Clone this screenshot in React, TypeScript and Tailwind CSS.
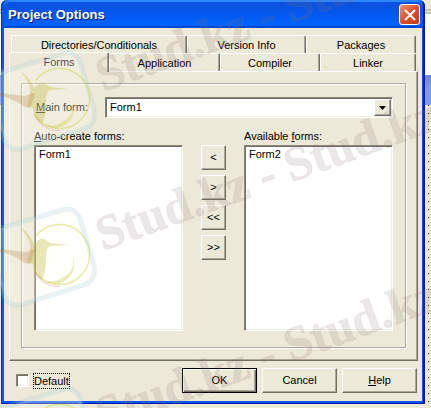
import React from 'react';
import clsx from 'clsx';

const raised =
  'border border-t-white border-l-white border-r-[#716f64] border-b-[#716f64] shadow-[inset_-1px_-1px_0_#aca899]';
const sunken =
  'rounded-none border border-t-[#8a877a] border-l-[#8a877a] border-r-white border-b-white bg-white shadow-[inset_1px_1px_0_#716f64,inset_-1px_-1px_0_#f1efe2]';

interface TabProps {
  children: React.ReactNode;
  active?: boolean;
}

const Tab: React.FC<TabProps> = ({ children, active }) => (
  <button
    role="tab"
    aria-selected={!!active}
    className={clsx(
      'rounded-t-[2px] border-t border-l border-r border-t-white border-l-white border-r-[#716f64] bg-[#ece9d8] text-center leading-[16px] shadow-[inset_-1px_0_0_#aca899]',
      active ? '-mt-px -mb-px -ml-0.5 pb-0.5' : 'h-[18px]'
    )}
  >
    {children}
  </button>
);

interface FormListProps {
  id: string;
  label: React.ReactNode;
  items: string[];
}

const FormList: React.FC<FormListProps> = ({ id, label, items }) => (
  <div>
    <label htmlFor={id} className="block h-4 leading-[14px]">{label}</label>
    <select
      id={id}
      size={2}
      className={clsx('block h-[186px] w-full appearance-none overflow-hidden p-0.5 outline-none', sunken)}
    >
      {items.map(item => (
        <option key={item} className="min-h-0 p-0 pl-0.5 leading-[13px]">{item}</option>
      ))}
    </select>
  </div>
);

const MoveButton: React.FC<{ sign: string; title: string }> = ({ sign, title }) => (
  <button aria-label={title} className={clsx('h-[25px] w-full leading-none', raised)}>{sign}</button>
);

const DialogButton: React.FC<{ children: React.ReactNode; primary?: boolean }> = ({ children, primary }) => (
  <button
    className={clsx(
      'h-[25px] w-[75px]',
      primary
        ? 'border border-black shadow-[inset_1px_1px_0_#fff,inset_-1px_-1px_0_#716f64,inset_-2px_-2px_0_#aca899]'
        : raised
    )}
  >
    {children}
  </button>
);

// Hummingbird in front of a ring, on a tilted card
const BirdMark: React.FC<{ y: number }> = ({ y }) => (
  <g transform={`translate(0 ${y})`} fill="none">
    <path
      d="M2 20 L62 2 Q75 -2 80 10 L94 57 Q97 72 84 77 L24 96 Q7 101 3 84 L-10 40 Q-12 24 2 20 Z"
      fill="#fbfdf0" fillOpacity=".3" stroke="#a5cdd6" strokeOpacity=".24" strokeWidth="5"
    />
    <path d="M36 28 A30 30 0 1 1 34 62" stroke="#c9cc2c" strokeOpacity=".4" strokeWidth="1.5" />
    <path d="M34 62 Q43 80 60 78" stroke="#e88a8a" strokeOpacity=".3" strokeWidth="1.5" />
    <path d="M73 47 Q76 64 62 70 Q54 75 44 73 Q58 80 67 71 Q77 63 73 47 Z" fill="#c9cc2c" fillOpacity=".35" />
    <path
      d="M20 19 Q31 26 34 37 Q39 28 46 32 L50 35 L68 37 L50 38 Q46 40 46 50 Q46 64 42 72 Q34 66 33 56 L28 55 Q26 54 30 44 Q32 32 20 19 Z"
      fill="#bfb52e" fillOpacity=".32"
    />
    <path d="M0 41 L26 44 Q33 40 35 42 L31 54 Q28 58 22 53 Q12 46 0 44 Z" fill="#b5702f" fillOpacity=".25" />
  </g>
);

const MarkText: React.FC<{ y: number }> = ({ y }) => (
  <text
    transform={`translate(103 ${y}) rotate(-20)`}
    className="font-['Liberation_Serif',serif] text-[49px] font-bold"
    fill="#7a6f6f" fillOpacity=".16" stroke="#c88" strokeOpacity=".1"
  >
    Stud.kz - Stud.kz
  </text>
);

const App: React.FC = () => (
  <div className="relative min-h-[408px] overflow-hidden font-['Liberation_Sans',sans-serif] text-[11px] text-black">
    {/* Designer window behind the dialog */}
    <div className="absolute inset-0 flex flex-col">
      <div className="h-[9px] bg-[#ece9d8]" />
      <div className="h-[5px] border-y-2 border-[#c5c2b0] bg-[#ece9d8]" />
      <div className="h-[61px] bg-white" />
      <div className="h-[30px] bg-linear-to-b from-[#6f86d0] via-[#809be4] to-[#7f9ce8]" />
      <div className="flex flex-1 justify-end bg-[#ece9d8] pr-0.5">
        <div className="w-px bg-[repeating-linear-gradient(#222_0_1px,transparent_1px_8px)]" />
      </div>
    </div>

    <div
      role="dialog"
      aria-label="Project Options"
      className="relative mr-1.5 ml-px rounded-t-[6px] bg-[#0a55ee] px-[3px] pb-[3px] shadow-[inset_1px_0_0_#0831d9,inset_-2px_-1px_0_#0019a8]"
    >
      <div className="flex h-7 items-center justify-between rounded-t-[5px] bg-linear-to-b from-[#0a4fd8] via-[#0458ee] to-[#0066ff] pt-px pr-0.5 pl-1 shadow-[inset_0_2px_1px_#2f86ff,inset_0_-2px_1px_#0048d0]">
        <h1 className="text-[13px] font-bold text-white text-shadow-[1px_1px_0_#0a1883]">Project Options</h1>
        <button
          aria-label="Close"
          className="flex size-[21px] items-center justify-center rounded-[3px] border border-white bg-linear-to-br from-[#f0906f] via-[#dd4f28] to-[#c03a14]"
        >
          <svg viewBox="0 0 12 12" className="size-3" stroke="#fff" strokeWidth="2">
            <path d="M1 1 L11 11 M11 1 L1 11" />
          </svg>
        </button>
      </div>

      <div className="bg-[#ece9d8] pt-[7px] pb-2">
        <div className="mr-1 ml-[5px]">
          <div role="tablist" className="mr-0.5 ml-0.5">
            <div className="grid grid-cols-[176fr_119fr_110fr]">
              <Tab>Directories/Conditionals</Tab>
              <Tab>Version Info</Tab>
              <Tab>Packages</Tab>
            </div>
            <div className="relative grid grid-cols-[98fr_111fr_100fr_96fr]">
              <Tab active>Forms</Tab>
              <Tab>Application</Tab>
              <Tab>Compiler</Tab>
              <Tab>Linker</Tab>
            </div>
          </div>

          <div className="border border-t-white border-l-white border-r-[#716f64] border-b-[#716f64] px-[11px] pt-[11px] pb-3 shadow-[inset_-1px_-1px_0_#aca899]">
            <div className="border border-[#aca899] px-3 pt-[13px] pb-4 shadow-[1px_1px_0_#fff,inset_1px_1px_0_#fff]">
              <div className="flex items-center">
                <label htmlFor="main-form" className="w-[71px] pl-0.5"><u>M</u>ain form:</label>
                <div className="relative flex-1">
                  <select
                    id="main-form"
                    className={clsx('block h-[21px] w-full appearance-none pl-1 outline-none', sunken)}
                  >
                    <option>Form1</option>
                  </select>
                  <span className={clsx('pointer-events-none absolute top-0.5 right-0.5 flex size-[17px] items-center justify-center bg-[#ece9d8]', raised)}>
                    <svg viewBox="0 0 7 4" className="h-1 w-[7px]"><path d="M0 0 H7 L3.5 4 Z" /></svg>
                  </span>
                </div>
              </div>

              <div className="mt-[11px] grid grid-cols-[1fr_25px_1fr] gap-x-[18px]">
                <FormList id="auto-create" label={<><u>A</u>uto-create forms:</>} items={['Form1']} />
                <div className="flex flex-col gap-[5px] pt-4">
                  <MoveButton sign="<" title="Move to auto-create" />
                  <MoveButton sign=">" title="Move to available" />
                  <MoveButton sign="<<" title="Move all to auto-create" />
                  <MoveButton sign=">>" title="Move all to available" />
                </div>
                <FormList id="available" label={<>Available <u>f</u>orms:</>} items={['Form2']} />
              </div>
            </div>
          </div>
        </div>

        <div className="mt-[7px] flex items-center pr-[5px] pl-3">
          <label className="flex items-center gap-1">
            <input type="checkbox" className={clsx('size-[13px] appearance-none', sunken)} />
            <span className="border border-dotted border-black leading-[14px]">Default</span>
          </label>
          <div className="ml-auto flex gap-[5px]">
            <DialogButton primary>OK</DialogButton>
            <DialogButton>Cancel</DialogButton>
            <DialogButton><u>H</u>elp</DialogButton>
          </div>
        </div>
      </div>
    </div>

    <svg aria-hidden="true" className="pointer-events-none absolute inset-0 size-full">
      <BirdMark y={52} />
      <BirdMark y={208} />
      <BirdMark y={388} />
      <MarkText y={92} />
      <MarkText y={251} />
      <MarkText y={431} />
    </svg>
  </div>
);

export default App;
